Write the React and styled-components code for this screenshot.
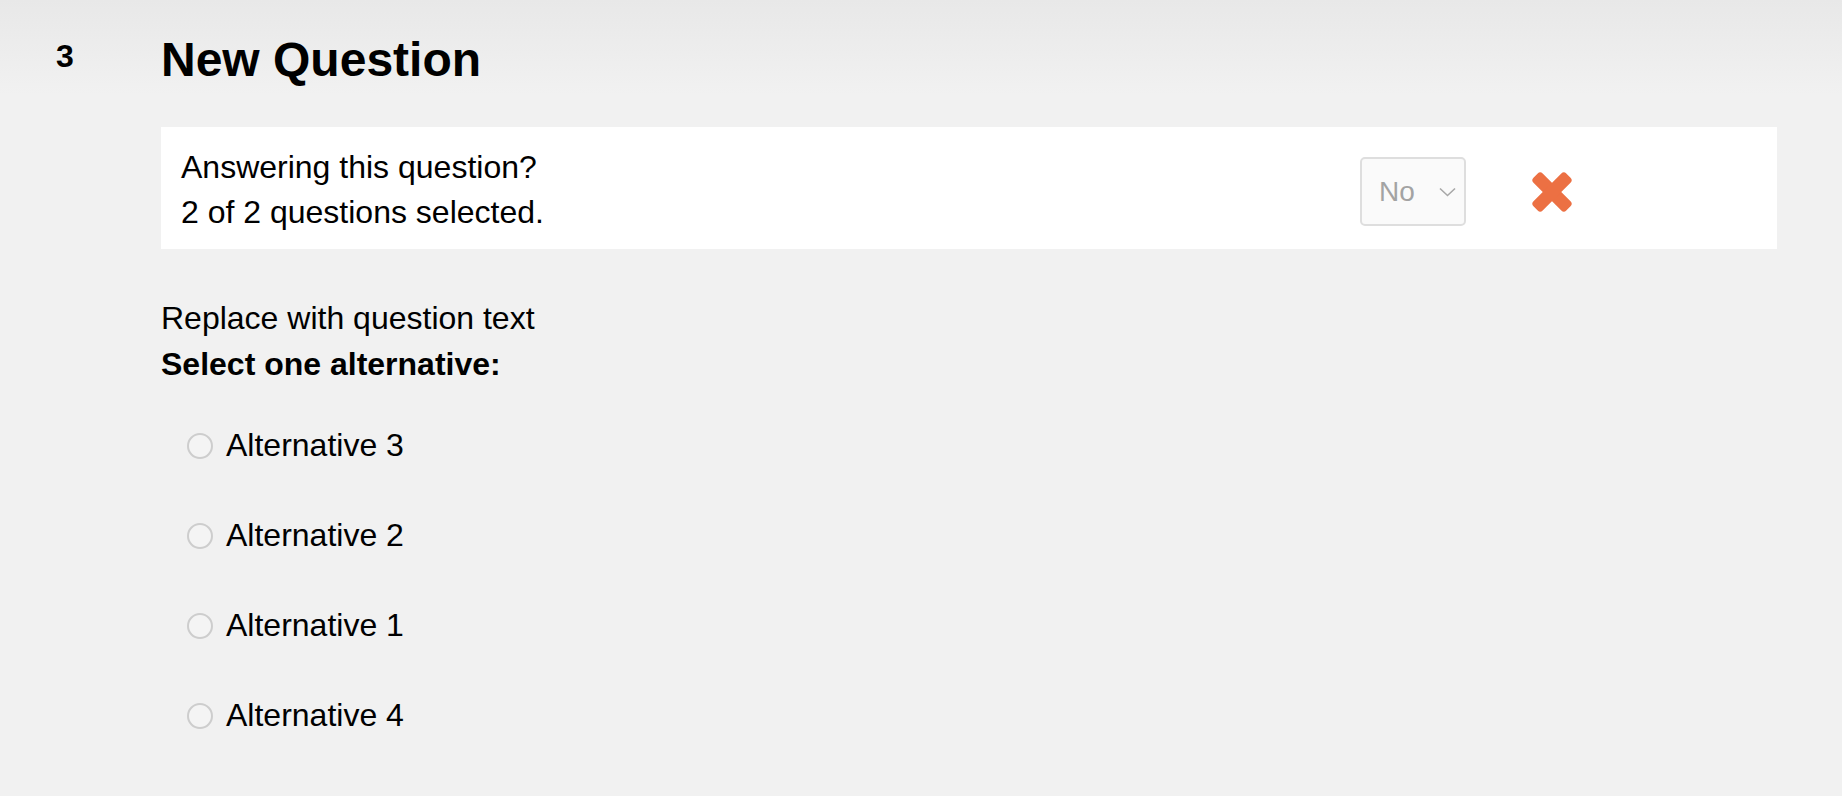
import React from "react";
import styled, { createGlobalStyle } from "styled-components";

const GlobalStyle = createGlobalStyle`
  html, body {
    margin: 0;
    padding: 0;
    background: #f1f1f1;
  }
  body {
    font-family: "Liberation Sans", Arial, sans-serif;
    color: #000;
  }
`;

const Page = styled.div`
  min-height: 796px;
  box-sizing: border-box;
  background: linear-gradient(#e8e8e8 0px, #f1f1f1 95px, #f1f1f1 100%);
  padding-top: 32px;
  display: flex;
  align-items: flex-start;
`;

const NumberCol = styled.div`
  width: 161px;
  box-sizing: border-box;
  padding-left: 56px;
  padding-top: 4px;
  font-size: 32px;
  line-height: 40px;
  font-weight: 700;
`;

const Content = styled.div`
  width: 1616px;
  display: flex;
  flex-direction: column;
`;

const Title = styled.h1`
  margin: 0;
  font-size: 48px;
  line-height: 56px;
  font-weight: 700;
`;

const Panel = styled.div`
  margin-top: 39px;
  background: #ffffff;
  display: flex;
  align-items: center;
  padding: 18px 204px 14px 20px;
  height: 122px;
  box-sizing: border-box;
`;

const PanelText = styled.div`
  flex: 1;
  font-size: 32px;
  line-height: 45px;
`;

const Controls = styled.div`
  display: flex;
  align-items: center;
  gap: 65px;
  margin-top: 3px;
`;

const SelectBox = styled.div`
  width: 106px;
  height: 69px;
  box-sizing: border-box;
  border: 2px solid #dedede;
  border-radius: 5px;
  background: #fafafa;
  display: flex;
  align-items: center;
  justify-content: space-between;
  padding: 0 8px 0 17px;
  font-size: 28px;
  color: #a3a3a3;
`;

const Question = styled.div`
  margin-top: 46px;
  font-size: 32px;
  line-height: 46px;
`;

const Prompt = styled.div`
  font-weight: 700;
`;

const Alternatives = styled.div`
  margin-top: 36px;
  display: flex;
  flex-direction: column;
  gap: 46px;
`;

const AltRow = styled.label`
  display: flex;
  align-items: center;
  gap: 13px;
  padding-left: 26px;
  font-size: 32px;
  line-height: 44px;
`;

const Radio = styled.span`
  width: 26px;
  height: 26px;
  box-sizing: border-box;
  border-radius: 50%;
  border: 2px solid #cdcdcd;
  background: #f4f4f4;
  flex-shrink: 0;
  margin-top: 2px;
`;

const Chevron = () => (
  <svg width="17" height="10" viewBox="0 0 17 10" fill="none">
    <path d="M1 1.5 L8.5 8.5 L16 1.5" stroke="#a8a8a8" strokeWidth="1.6" />
  </svg>
);

const CrossIcon = () => (
  <svg width="42" height="42" viewBox="0 0 42 42">
    <rect x="-2.2" y="14.5" width="46.4" height="13" rx="3.5" fill="#ec7043" transform="rotate(45 21 21)" />
    <rect x="-2.2" y="14.5" width="46.4" height="13" rx="3.5" fill="#ec7043" transform="rotate(-45 21 21)" />
  </svg>
);

const alternatives = ["Alternative 3", "Alternative 2", "Alternative 1", "Alternative 4"];

export default function App() {
  return (
    <>
      <GlobalStyle />
      <Page>
        <NumberCol>3</NumberCol>
        <Content>
          <Title>New Question</Title>
          <Panel>
            <PanelText>
              <div>Answering this question?</div>
              <div>2 of 2 questions selected.</div>
            </PanelText>
            <Controls>
              <SelectBox>
                <span>No</span>
                <Chevron />
              </SelectBox>
              <CrossIcon />
            </Controls>
          </Panel>
          <Question>
            <div>Replace with question text</div>
            <Prompt>Select one alternative:</Prompt>
          </Question>
          <Alternatives>
            {alternatives.map((a) => (
              <AltRow key={a}>
                <Radio />
                <span>{a}</span>
              </AltRow>
            ))}
          </Alternatives>
        </Content>
      </Page>
    </>
  );
}
